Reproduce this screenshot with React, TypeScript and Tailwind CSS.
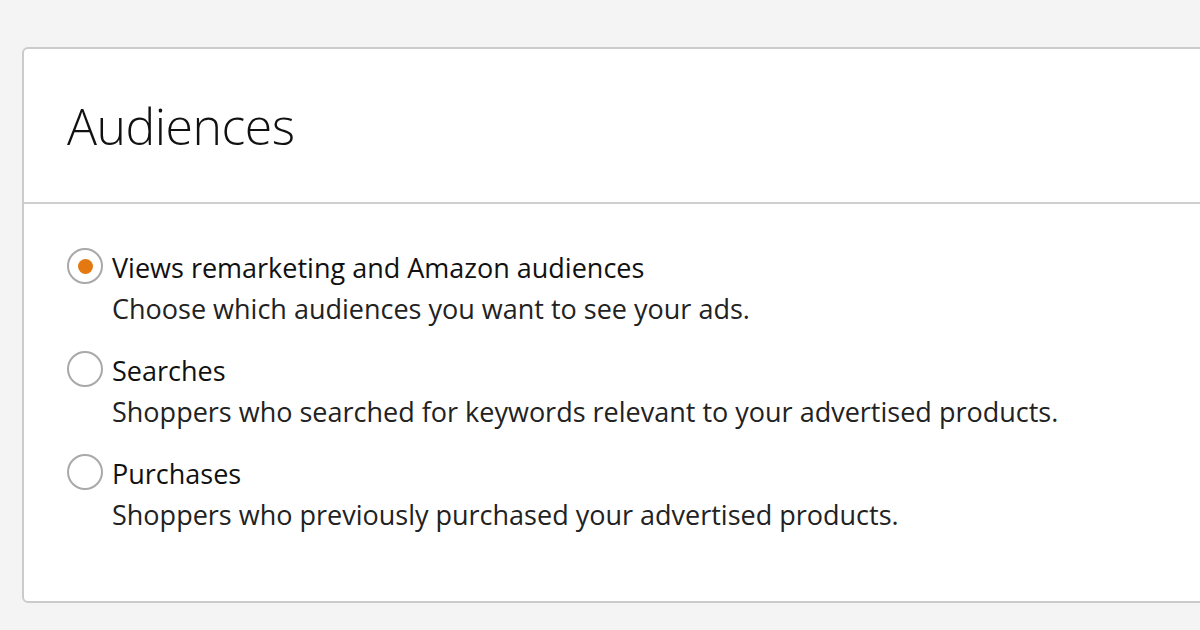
const options = [
  {
    label: 'Views remarketing and Amazon audiences',
    description: 'Choose which audiences you want to see your ads.',
  },
  {
    label: 'Searches',
    description: 'Shoppers who searched for keywords relevant to your advertised products.',
  },
  {
    label: 'Purchases',
    description: 'Shoppers who previously purchased your advertised products.',
  },
];

function Radio({ checked }: { checked: boolean }) {
  return (
    <div className="mt-[1px] flex h-[36px] w-[36px] shrink-0 items-center justify-center rounded-full border-2 border-[#a9a9a9] bg-white">
      {checked && <div className="h-[15px] w-[15px] rounded-full bg-[#e47911]" />}
    </div>
  );
}

export default function App() {
  const selected = 0;

  return (
    <div className="h-[630px] w-[1200px] overflow-hidden bg-[#f4f4f4] pl-[22px] pt-[47px] font-['Open_Sans',sans-serif] text-[#111]">
      <div className="h-[556px] w-[1220px] rounded-[6px] border-2 border-[#cbcbcb] bg-white">
        {/* header */}
        <div className="flex h-[155px] items-center border-b-2 border-[#cfcfcf] pl-[43px]">
          <h1 className="mt-[1px] text-[50px] font-light tracking-[-0.5px]">Audiences</h1>
        </div>

        {/* options */}
        <div className="flex flex-col gap-[20px] pl-[43px] pt-[43px]">
          {options.map((opt, i) => (
            <div key={opt.label} className="flex gap-[9px]">
              <Radio checked={i === selected} />
              <div className="text-[27px] leading-[42px]">
                <div>{opt.label}</div>
                <div className="-mt-[1px] text-[#222]">{opt.description}</div>
              </div>
            </div>
          ))}
        </div>
      </div>
    </div>
  );
}
